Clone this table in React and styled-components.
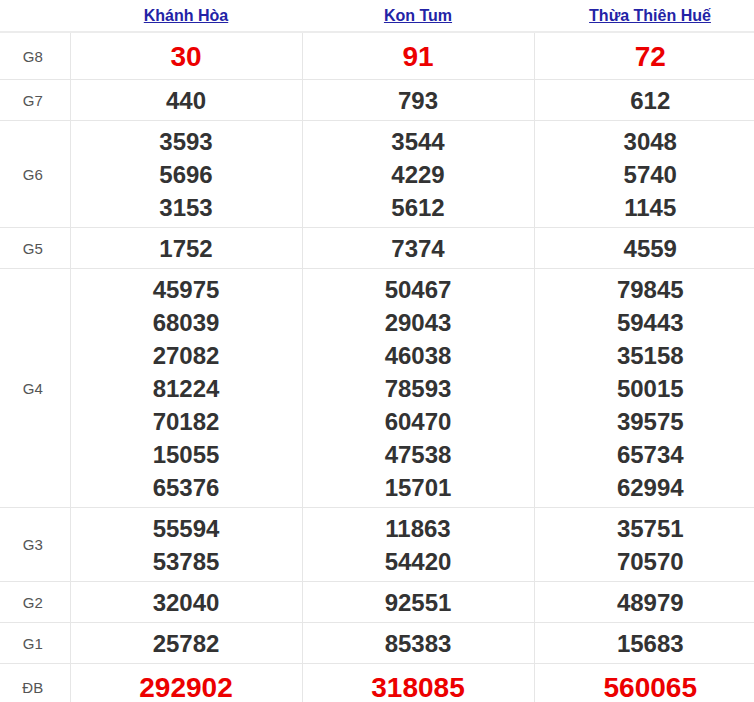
import React from 'react'
import styled, { createGlobalStyle } from 'styled-components'

const GlobalStyle = createGlobalStyle`
    html, body {
        margin: 0;
        padding: 0;
        background: #fff;
        overflow: hidden;
        font-family: "Liberation Sans", Arial, sans-serif;
    }
`

const Table = styled.table`
    width: 766px;
    border-collapse: collapse;
    table-layout: fixed;
`

const HeadCell = styled.th`
    height: 31px;
    padding: 0;
    text-align: center;
    vertical-align: middle;
    border-bottom: 2px solid #ececec;
    font-weight: normal;
`

const ProvinceLink = styled.a`
    color: #2323a6;
    font-size: 16px;
    font-weight: bold;
    text-decoration: underline;
`

const Row = styled.tr`
    border-bottom: 1px solid #e6e6e6;
`

const Label = styled.td`
    width: 70px;
    padding: 0 4px 0 0;
    text-align: center;
    vertical-align: middle;
    color: #555;
    font-size: 15px;
    border-right: 1px solid #e6e6e6;
`

const Cell = styled.td`
    padding: 4px 0 3px;
    text-align: center;
    vertical-align: middle;
    border-right: 1px solid #e6e6e6;
    &:last-child {
        border-right: none;
    }
`

const Num = styled.div`
    font-weight: bold;
    font-size: ${props => props.big ? '28px' : '24px'};
    line-height: ${props => props.big ? '39px' : '33px'};
    color: ${props => props.big ? '#ec0000' : '#333'};
`

const provinces = ['Khánh Hòa', 'Kon Tum', 'Thừa Thiên Huế']

const prizes = [
    { name: 'G8', big: true, values: [['30'], ['91'], ['72']] },
    { name: 'G7', values: [['440'], ['793'], ['612']] },
    { name: 'G6', values: [['3593', '5696', '3153'], ['3544', '4229', '5612'], ['3048', '5740', '1145']] },
    { name: 'G5', values: [['1752'], ['7374'], ['4559']] },
    {
        name: 'G4', values: [
            ['45975', '68039', '27082', '81224', '70182', '15055', '65376'],
            ['50467', '29043', '46038', '78593', '60470', '47538', '15701'],
            ['79845', '59443', '35158', '50015', '39575', '65734', '62994'],
        ]
    },
    { name: 'G3', values: [['55594', '53785'], ['11863', '54420'], ['35751', '70570']] },
    { name: 'G2', values: [['32040'], ['92551'], ['48979']] },
    { name: 'G1', values: [['25782'], ['85383'], ['15683']] },
    { name: 'ĐB', big: true, values: [['292902'], ['318085'], ['560065']] },
]

export default function App() {
    return (
        <>
            <GlobalStyle />
            <Table>
                <colgroup>
                    <col style={{ width: 70 }} />
                    <col />
                    <col />
                    <col />
                </colgroup>
                <thead>
                    <tr>
                        <HeadCell />
                        {provinces.map(p => (
                            <HeadCell key={p}>
                                <ProvinceLink href="#">{p}</ProvinceLink>
                            </HeadCell>
                        ))}
                    </tr>
                </thead>
                <tbody>
                    {prizes.map(prize => (
                        <Row key={prize.name}>
                            <Label>{prize.name}</Label>
                            {prize.values.map((list, i) => (
                                <Cell key={i}>
                                    {list.map(n => <Num key={n} big={prize.big}>{n}</Num>)}
                                </Cell>
                            ))}
                        </Row>
                    ))}
                </tbody>
            </Table>
        </>
    )
}
